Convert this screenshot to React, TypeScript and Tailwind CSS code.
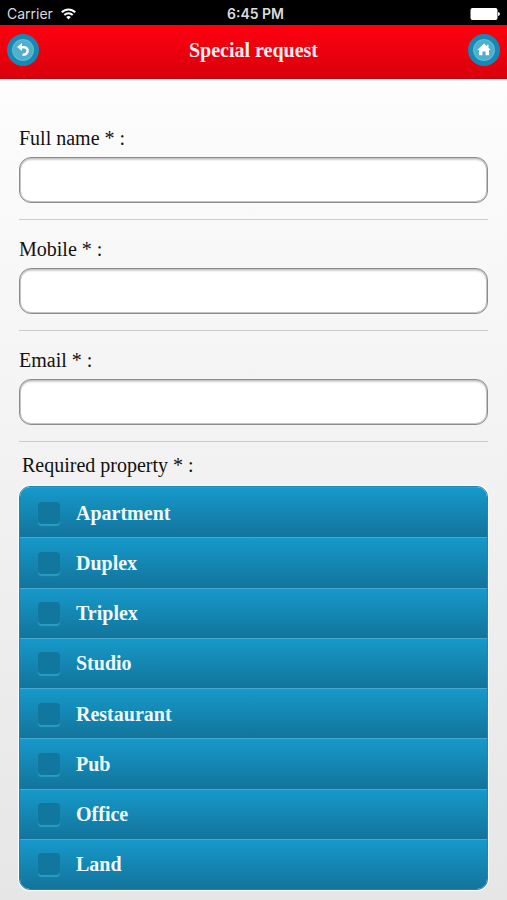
import React from "react";

const fields = [
  { id: "name", label: "Full name * :", type: "text" },
  { id: "mobile", label: "Mobile * :", type: "tel" },
  { id: "email", label: "Email * :", type: "email" },
];

const properties = ["Apartment", "Duplex", "Triplex", "Studio", "Restaurant", "Pub", "Office", "Land"];

function StatusBar() {
  return (
    <div className="grid h-[25px] grid-cols-3 items-center bg-black pt-[2px] px-[7px] font-['Inter','Liberation_Sans',sans-serif] text-[14px] leading-5 text-[#dcdcdc]">
      <div className="flex items-center gap-2">
        <span>Carrier</span>
        <svg width="15" height="12" viewBox="0 0 15 12" fill="none" stroke="#fff" strokeWidth="2">
          <path d="M0.8 4.3C4.6 0.4 10.4 0.4 14.2 4.3" />
          <path d="M3.3 7C5.7 4.6 9.3 4.6 11.7 7" />
          <path d="M5.2 9Q7.5 7 9.8 9L7.5 11.4Z" fill="#fff" stroke="none" />
        </svg>
      </div>
      <span className="pl-1 text-center font-semibold">6:45 PM</span>
      <svg className="justify-self-end" width="30" height="12" viewBox="0 0 30 12" fill="#fff">
        <rect x="0.5" y="0" width="27" height="12" rx="2" />
        <path d="M28 4Q30 4.4 30 6T28 8Z" />
      </svg>
    </div>
  );
}

function RoundButton({ label, children }: { label: string; children: React.ReactNode }) {
  return (
    <button
      type="button"
      aria-label={label}
      className="flex size-8 items-center justify-center rounded-full border-[5px] border-[#1688b4] bg-[#4fafcc] shadow-[inset_0_0_1px_1px_#65bdd5]"
    >
      {children}
    </button>
  );
}

export default function App() {
  return (
    <div className="min-h-screen bg-linear-to-b from-white to-[#e6e6e6] font-['Liberation_Serif',serif] text-[20px] leading-6 text-[#111]">
      <StatusBar />
      <header className="flex h-[54px] items-center justify-between border-b border-[#c8000b] bg-linear-to-b from-[#ff0010] to-[#d9000c] px-[7px] pb-1">
        <RoundButton label="Back">
          <svg className="shrink-0" width="14" height="16" viewBox="0 0 14 16" fill="none">
            <path d="M4 5.2H8.2C13.2 5.5 12.8 12.8 6.5 12.7" stroke="#fff" strokeWidth="2.5" />
            <path d="M1 5L6 1V9Z" fill="#fff" />
          </svg>
        </RoundButton>
        <h1 className="font-bold text-[#ffeeee]">Special request</h1>
        <RoundButton label="Home">
          <svg className="shrink-0" width="14" height="13" viewBox="0 0 14 13" fill="#fff">
            <path d="M7 0.5L10 3.3V1.7H11.5V4.7L13.7 6.9H12V12.2H8.6V8.4H5.4V12.2H2V6.9H0.3Z" />
          </svg>
        </RoundButton>
      </header>

      <form className="px-[19px] pt-[30px] pb-[10px]">
        {fields.map((field) => (
          <div key={field.id} className="border-b border-[#cccccc] pt-[17px] pb-4">
            <label htmlFor={field.id} className="block">
              {field.label}
            </label>
            <input
              id={field.id}
              type={field.type}
              className="mt-[7px] block h-[46px] w-full rounded-[12px] border border-[#8c8c8c] bg-white px-3 shadow-[inset_0_0_0_1px_#c4c4c4,inset_0_2px_2px_#d0d0d0] outline-none"
            />
          </div>
        ))}

        <fieldset>
          <legend className="px-[3px] pt-[11px]">Required property * :</legend>
          <div className="mt-[9px] grid h-[404px] auto-rows-fr overflow-hidden rounded-[11px] border border-[#1b86b0] shadow-[0_0_1px_1px_#ffffff]">
            {properties.map((name) => (
              <label
                key={name}
                className="flex items-center gap-4 border-t border-[#45a9cf] bg-linear-to-b from-[#1699cb] to-[#12749b] pl-[18px] font-bold text-[#eefaff] first:border-t-[#2b9cc6]"
              >
                <input
                  type="checkbox"
                  name="property"
                  value={name}
                  className="size-[22px] appearance-none rounded-[4px] bg-[#12779f] shadow-[0_2px_1px_#2b9cc2]"
                />
                {name}
              </label>
            ))}
          </div>
        </fieldset>
      </form>
    </div>
  );
}
